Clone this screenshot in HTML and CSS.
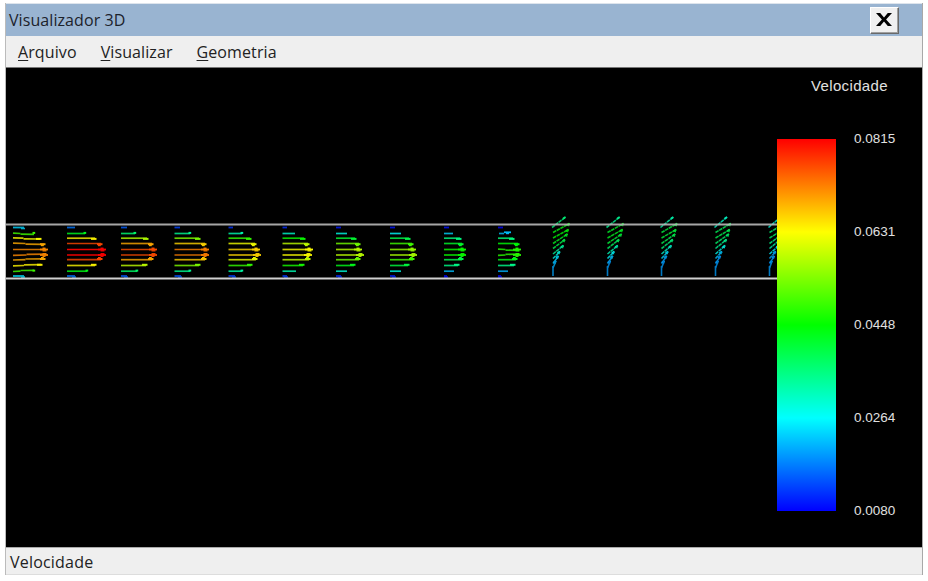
FILE: index.html
```html
<!DOCTYPE html>
<html lang="pt-BR">
<head>
<meta charset="utf-8">
<title>Visualizador 3D</title>
<link rel="stylesheet" href="styles.css">
</head>
<body>
<div class="window">
  <header class="titlebar">
    <span class="title">Visualizador 3D</span>
    <button class="close" aria-label="Fechar"><svg width="16" height="13" viewBox="0 0 16 13"><path d="M0 0h4.200L8 4.400 11.800 0H16L10.100 6.500 16 13h-4.200L8 8.600 4.200 13H0L5.900 6.500z" fill="#000"/></svg></button>
  </header>
  <nav class="menu">
    <span><u>A</u>rquivo</span>
    <span><u>V</u>isualizar</span>
    <span><u>G</u>eometria</span>
  </nav>
  <main class="viewport">
    <svg class="field" id="field" width="771" height="479" viewBox="6 68 771 479"></svg>
    <aside class="legend">
      <div class="legend-title">Velocidade</div>
      <div class="scale">
        <div class="ramp"></div>
        <div class="ticks"><span>0.0815</span><span>0.0631</span><span>0.0448</span><span>0.0264</span><span>0.0080</span></div>
      </div>
    </aside>
  </main>
  <footer class="status">Velocidade</footer>
</div>
<script src="plot.js"></script>
</body>
</html>
```
FILE: styles.css
```css
* { box-sizing: border-box; }
body { margin: 0; width: 928px; height: 581px; overflow: hidden; background: #fff; font-family: "Open Sans", "Noto Sans", sans-serif; }
.window { width: 918px; height: 572px; margin: 3px 0 0 5px; background: #efefef; display: flex; flex-direction: column; border-left: 1px solid #bbb; border-right: 1px solid #a8a8a8; }
.titlebar { height: 33px; flex: none; display: flex; align-items: center; justify-content: space-between; padding: 2px 23px 0 3px; background: #99b4d1; border-top: 1px solid #dde4ec; }
.title { font-size: 16px; letter-spacing: 0.08px; color: #1c222b; white-space: nowrap; line-height: 24px; margin-top: -2px; }
.close { width: 29px; height: 27px; padding: 0 1px 2px 0; margin-top: -1px; display: flex; align-items: center; justify-content: center; background: #f0f0f0; border: 1px solid; border-color: #fff #696969 #696969 #fff; box-shadow: inset -1px -1px #a0a0a0; }
.menu { height: 32px; flex: none; display: flex; gap: 24px; padding: 1px 0 0 12px; font-size: 16px; letter-spacing: .1px; line-height: 30px; color: #222; border-bottom: 1px solid #777; }
.menu u { text-underline-offset: 2px; text-decoration-thickness: 1px; }
.viewport { height: 479px; flex: none; display: flex; background: #000; }
.field { display: block; flex: none; }
.legend { flex: 1; color: #e0e0e0; font-family: "Liberation Sans", sans-serif; }
.legend-title { font-size: 15px; line-height: 18px; padding: 9px 0 0 34px; letter-spacing: .35px; }
.scale { display: flex; gap: 18px; margin-top: 36px; }
.ramp { width: 59px; height: 372px; margin-top: 8px; background: linear-gradient(#f00, #ff0 25%, #0f0 50%, #0ff 75%, #00f); }
.ticks { height: 387px; display: flex; flex-direction: column; justify-content: space-between; font-size: 13.5px; line-height: 15px; }
.status { height: 28px; flex: none; border-top: 1px solid #aaa; border-bottom: 1px solid #ddd; padding: 2px 0 0 4px; font-size: 16px; letter-spacing: .2px; line-height: 25px; color: #222; }
```
FILE: plot.js
```js
const rows = [227.5, 233.5, 238.2, 243.5, 249.5, 255, 259.7, 265.5, 271.2, 276];
const profiles = [
  [13, [25, 36, 42, 46, 48, 48, 46, 43, 36, 25], [190, 105, 60, 40, 32, 32, 40, 58, 105, 187]],
  [67, [76, 87, 97, 103, 106, 106, 103, 97, 89, 76], [212, 128, 58, 17, 0, 0, 17, 58, 125, 212]],
  [121, [128, 137, 149, 154, 157, 157, 154, 148, 139, 128], [218, 147, 78, 40, 18, 18, 40, 75, 145, 218]],
  [174.5, [181, 192, 201, 207, 209, 209, 207, 201, 192, 182], [224, 155, 90, 50, 30, 30, 48, 90, 155, 220]],
  [228.5, [234, 244, 252, 257, 260, 261, 258, 253, 244, 236], [228, 162, 108, 63, 50, 50, 65, 108, 160, 224]],
  [282.5, [288, 297, 306, 310, 313, 312, 311, 305, 298, 288], [230, 168, 118, 75, 60, 60, 75, 115, 163, 226]],
  [336, [342, 349, 357, 361, 362, 364, 361, 356, 349, 342], [234, 175, 132, 93, 76, 76, 95, 126, 172, 230]],
  [390, [396, 403, 411, 414, 416, 417, 415, 410, 403, 396], [235, 180, 138, 105, 84, 80, 105, 135, 175, 233]],
  [444, [450, 455, 462, 464, 466, 466, 464, 460, 456, 448], [236, 190, 151, 130, 118, 118, 138, 152, 195, 238]],
  [498, [504, 511, 515, 520, 521, 521, 518, 516, 510, 502], [239, 195, 150, 122, 112, 110, 125, 153, 198, 238]]
];
// Start offset, start y, end offset, end y and hue of each inclined vector.
const fan = [
  [0, 227.5, 13.5, 217, 150], [1, 232.5, 17.5, 223.5, 124], [1, 238, 16.5, 229.5, 122],
  [1, 243.5, 15.5, 234, 128], [1, 248.5, 13, 239.5, 138], [1, 254, 11.5, 245.5, 158],
  [1, 258.5, 8, 251.5, 175], [1, 263.5, 6.5, 256, 188], [1, 268, 4, 261, 197], [1, 276, 1, 266, 201]
];
const field = document.getElementById("field");
function line(x1, y1, x2, y2, color, width, dash) {
  const el = document.createElementNS("http://www.w3.org/2000/svg", "line");
  const attrs = { x1, y1, x2, y2, stroke: color, "stroke-width": width };
  if (dash) attrs["stroke-dasharray"] = dash;
  for (const k in attrs) el.setAttribute(k, attrs[k]);
  field.appendChild(el);
}
profiles.forEach(([x, ends, hues], c) => rows.forEach((y, r) => {
  const end = ends[r], hue = hues[r], dir = r < 5 ? 1 : -1;
  const shaft = `hsl(${hue} 100% ${hue === 0 ? 46 : 40}%)`;
  const tip = `hsl(${hue} 100% 48%)`;
  if (r === 0 || r === 9) {
    line(x, y, end - 1, y, shaft, 1.8);
    if (r === 9 || c === 0) line(end - 4, y + 1, end, y + 1, shaft, 1.6);
    return;
  }
  if (c === 9 && r === 1) {
    line(x + 1, y, x + 6, y, shaft, 1.7);
    line(x + 6, y - 1.2, end, y - 1.2, tip, 1.8);
    line(x + 8, y, x + 11, y, tip, 1.4);
    return;
  }
  const bent = (c === 0 && r !== 4) || (c === 9 && (r === 4 || r === 5));
  const mid = (x + end) / 2 - 4;
  line(x, bent ? y - .3 * dir : y, bent ? mid : end - 2, y, shaft, 1.7);
  if (bent) line(mid, y + dir * .7, end - 2, y + dir * .8, shaft, 1.7);
  if (r === 1 || r === 8) {
    if (c < 5) line(end - 3.5, y - .6, end - .8, y - .6, tip, 2);
    return;
  }
  if (r === 4 || r === 5) {
    line(end - 8, y, end, y, tip, 1.8);
    line(end - 5.5, y - 1.2 * dir, end - 2.5, y - 1.2 * dir, tip, 1.5);
    line(end - 5.5, y + 1.3 * dir, end - 1.5, y + 1.3 * dir, tip, 1.3);
    return;
  }
  line(end - 6, y + dir * .7, end - .5, y + dir * .7, tip, 2);
  if (r === 3 || r === 6) line(end - 5, y + 2 * dir, end - 2.2, y + 2 * dir, tip, 1.4);
}));
[552, 606.5, 660.5, 714.5, 768.5].forEach((x, c) => fan.forEach(([dx, y, ex, ey, hue], i) => {
  const endX = x + 1 + (ex - 1) * (1 - c * .025);
  const h = Math.min(203, hue + c * 6);
  line(x + dx, y, endX, ey, `hsl(${h} 100% 38%)`, 1.6, i < 7 ? "3.6 .6" : null);
  if (i < 9) line(endX - 2.5, ey + 1.8, endX, ey, `hsl(${h} 100% 45%)`, 2);
  if (i > 0 && i < 9) line(endX - .8, ey, endX - .8, ey + 2.8, `hsl(${h} 100% 40%)`, 1.2);
}));
line(6, 224.5, 777, 224.5, "rgba(184,184,184,.9)", 2);
line(6, 278.5, 777, 278.5, "#d0d0d0", 1.9);
```
